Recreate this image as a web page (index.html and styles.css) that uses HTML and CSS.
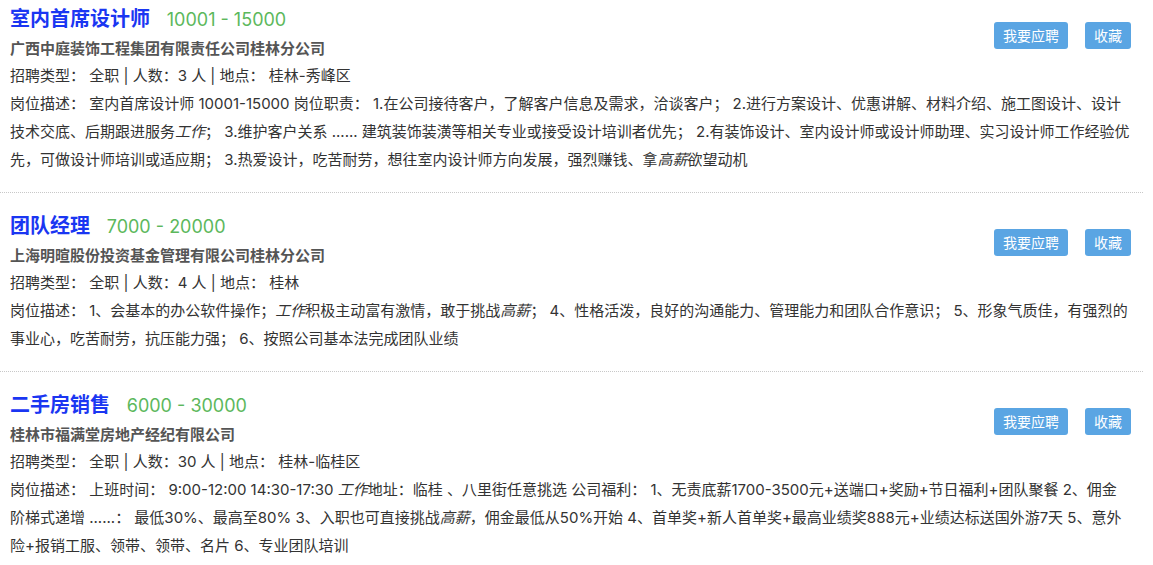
FILE: index.html
```html
<!DOCTYPE html>
<html lang="zh-CN">
<head>
  <meta charset="UTF-8" />
  <title>职位列表</title>
  <link rel="stylesheet" href="styles.css">
</head>
<body>
  <div class="job-list">

    <div class="job">
      <div class="actions">
        <button type="button" class="btn">我要应聘</button>
        <button type="button" class="btn">收藏</button>
      </div>
      <h2 class="job-title">室内首席设计师 <span class="salary">10001 - 15000</span></h2>
      <div class="company">广西中庭装饰工程集团有限责任公司桂林分公司</div>
      <div class="meta">招聘类型： 全职 | 人数：3 人 | 地点： 桂林-秀峰区</div>
      <p class="desc">岗位描述： 室内首席设计师 10001-15000 岗位职责： 1.在公司接待客户，了解客户信息及需求，洽谈客户； 2.进行方案设计、优惠讲解、材料介绍、施工图设计、设计技术交底、后期跟进服务<em>工作</em>； 3.维护客户关系 ...... 建筑装饰装潢等相关专业或接受设计培训者优先； 2.有装饰设计、室内设计师或设计师助理、实习设计师工作经验优先，可做设计师培训或适应期； 3.热爱设计，吃苦耐劳，想往室内设计师方向发展，强烈赚钱、拿<em>高薪</em>欲望动机</p>
    </div>

    <div class="job">
      <div class="actions">
        <button type="button" class="btn">我要应聘</button>
        <button type="button" class="btn">收藏</button>
      </div>
      <h2 class="job-title">团队经理 <span class="salary">7000 - 20000</span></h2>
      <div class="company">上海明暄股份投资基金管理有限公司桂林分公司</div>
      <div class="meta">招聘类型： 全职 | 人数：4 人 | 地点： 桂林</div>
      <p class="desc">岗位描述： 1、会基本的办公软件操作；<em>工作</em>积极主动富有激情，敢于挑战<em>高薪</em>； 4、性格活泼，良好的沟通能力、管理能力和团队合作意识； 5、形象气质佳，有强烈的事业心，吃苦耐劳，抗压能力强； 6、按照公司基本法完成团队业绩</p>
    </div>

    <div class="job">
      <div class="actions">
        <button type="button" class="btn">我要应聘</button>
        <button type="button" class="btn">收藏</button>
      </div>
      <h2 class="job-title">二手房销售 <span class="salary">6000 - 30000</span></h2>
      <div class="company">桂林市福满堂房地产经纪有限公司</div>
      <div class="meta">招聘类型： 全职 | 人数：30 人 | 地点： 桂林-临桂区</div>
      <p class="desc">岗位描述： 上班时间： 9:00-12:00 14:30-17:30 <em>工作</em>地址：临桂 、八里街任意挑选 公司福利： 1、无责底薪1700-3500元+送端口+奖励+节日福利+团队聚餐 2、佣金阶梯式递增 ......： 最低30%、最高至80% 3、入职也可直接挑战<em>高薪</em>，佣金最低从50%开始 4、首单奖+新人首单奖+最高业绩奖888元+业绩达标送国外游7天 5、意外险+报销工服、领带、领带、名片 6、专业团队培训</p>
    </div>

  </div>
</body>
</html>
```

FILE: styles.css
```css
body {
  font-family: Inter, "Noto Sans CJK SC", sans-serif;
  background: #fff;
  color: #333;
  margin: 0;
}

.job-list {
  width: 1143px;
}

.job {
  padding: 14px 12px 18px 10px;
  border-bottom: 1px dotted #c8c8c8;
}
.job:first-child {
  padding-top: 0;
}

.actions {
  float: right;
  display: flex;
  gap: 17px;
  margin-top: 22px;
}

.btn {
  background: #5aa5e3;
  color: #fff;
  border: none;
  border-radius: 3px;
  height: 27px;
  padding: 0 9px;
  font-family: inherit;
  font-size: 14px;
  line-height: 27px;
  cursor: pointer;
}
.btn:hover {
  background: #3f8fd2;
}

.job-title {
  margin: 0;
  font-size: 20px;
  line-height: 38px;
  font-weight: 700;
  color: #1a36f2;
}

.salary {
  margin-left: 12px;
  font-size: 18px;
  font-weight: 400;
  color: #5cb85c;
}

.company {
  font-size: 15px;
  font-weight: 700;
  color: #555;
  line-height: 20px;
}

.meta {
  font-size: 15px;
  line-height: 26px;
  margin-top: 4px;
}

.desc {
  font-size: 15px;
  line-height: 28px;
  margin: 1px 0 0;
}
.desc em {
  font-style: italic;
}
```
